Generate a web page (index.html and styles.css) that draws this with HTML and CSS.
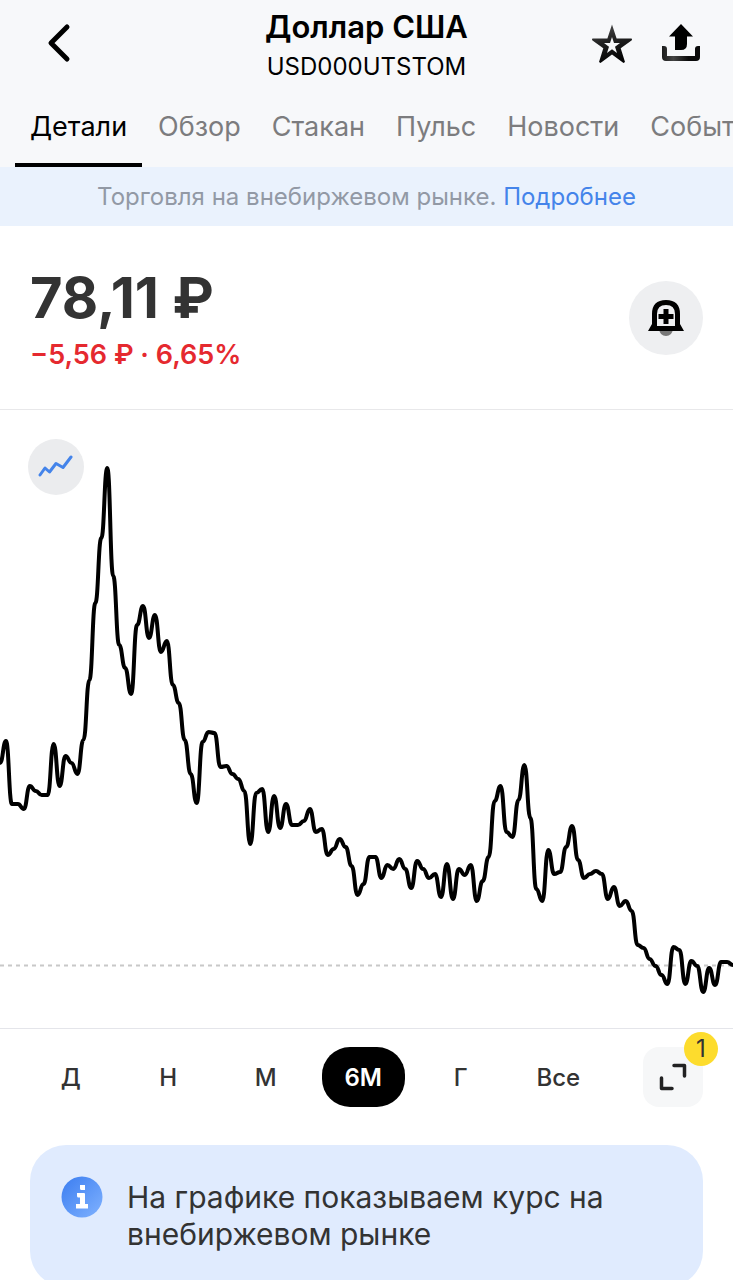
FILE: index.html
```html
<!DOCTYPE html>
<html lang="ru">
<head>
    <meta charset="UTF-8">
    <meta name="viewport" content="width=device-width, initial-scale=1.0">
    <title>Доллар США</title>
    <link rel="stylesheet" href="styles.css">
</head>
<body>
    <div class="screen">
        <header class="header">
            <div class="topbar">
                <div class="topbar-left">
                    <button type="button" class="icon-btn" aria-label="Назад">
                        <svg width="40" height="44" viewBox="0 0 40 44">
                            <path d="M27 7 11 23 27 39" fill="none" stroke="#000" stroke-width="5" stroke-linecap="round" stroke-linejoin="round"/>
                        </svg>
                    </button>
                </div>
                <div class="title">
                    <h1>Доллар США</h1>
                    <p>USD000UTSTOM</p>
                </div>
                <div class="topbar-right">
                    <button type="button" class="icon-btn" aria-label="В избранное">
                        <svg width="40" height="44" viewBox="0 0 40 44">
                            <defs>
                                <linearGradient id="starFill" x1="0" y1="0" x2="0.3" y2="1">
                                    <stop offset="0" stop-color="#555"/>
                                    <stop offset="0.5" stop-color="#222"/>
                                    <stop offset="1" stop-color="#050505"/>
                                </linearGradient>
                            </defs>
                            <path fill="url(#starFill)" fill-rule="evenodd" d="M20 2.500 24.600 16.500H39.500Q40.500 17.600 39.500 18.500L28.700 26.300 33 40 31.500 41 20 32.600 8.500 41 7 40 11.300 26.300 0.500 18.500Q-0.500 17.600 0.500 16.500H15.400ZM20 15 18 21H12L17 24.800 15 31 20 27.300 25 31 23 24.800 28 21H22Z"/>
                        </svg>
                    </button>
                    <button type="button" class="icon-btn" aria-label="Поделиться">
                        <svg width="40" height="44" viewBox="0 0 40 44">
                            <defs>
                                <linearGradient id="trayFill" x1="0" y1="0" x2="1" y2="0">
                                    <stop offset="0" stop-color="#1c1c1c"/>
                                    <stop offset="0.3" stop-color="#444"/>
                                    <stop offset="0.7" stop-color="#0a0a0a"/>
                                </linearGradient>
                            </defs>
                            <path d="M20 2 32 14.500H26V22Q26 28 20 28H14V14.500H8Z"/>
                            <path fill="url(#trayFill)" d="M1 24H3Q6 24 6 27V34H34V27Q34 24 37 24H39V35Q39 39 35 39H5Q1 39 1 35Z"/>
                        </svg>
                    </button>
                </div>
            </div>
            <nav class="tabs">
                <a href="#details" class="active">Детали</a>
                <a href="#overview">Обзор</a>
                <a href="#orderbook">Стакан</a>
                <a href="#pulse">Пульс</a>
                <a href="#news">Новости</a>
                <a href="#events">События</a>
            </nav>
        </header>

        <p class="notice">Торговля на внебиржевом рынке. <a href="#more">Подробнее</a></p>

        <section class="quote">
            <div>
                <p class="price">78,11 ₽</p>
                <p class="change">−5,56 ₽ · 6,65%</p>
            </div>
            <button type="button" class="alert-btn" aria-label="Уведомить о цене">
                <svg width="38" height="38" viewBox="0 0 38 38">
                    <path fill="#777" d="M12 30h14q-1 7-7 7t-7-7z"/>
                    <path fill-rule="evenodd" d="M5 15Q5 1 19 1T33 15V25L37 32H1L5 25ZM10 15V27H28V15Q28 6 19 6T10 15Z"/>
                    <path d="M16.500 10h5v5h5v5h-5v5h-5v-5h-5v-5h5z"/>
                </svg>
            </button>
        </section>

        <section class="chart">
            <button type="button" class="chart-type" aria-label="Тип графика">
                <svg width="36" height="24" viewBox="0 0 36 24">
                    <path d="M2 20 7 13 11.500 17 18 8.500 25 12.500 33 2" fill="none" stroke="#4484ea" stroke-width="3" stroke-linecap="round" stroke-linejoin="round"/>
                </svg>
            </button>
            <svg class="chart-plot" viewBox="0 410 733 618">
                <line class="chart-level" x1="0" y1="965.500" x2="733" y2="965.500"/>
                <path class="chart-line" id="chartLine"/>
            </svg>
        </section>

        <div class="controls">
            <div class="ranges">
                <button type="button">Д</button>
                <button type="button">Н</button>
                <button type="button">М</button>
                <button type="button" class="active">6М</button>
                <button type="button">Г</button>
                <button type="button">Все</button>
            </div>
            <button type="button" class="expand" aria-label="На весь экран, 1">
                <svg width="28" height="28" viewBox="0 0 28 28">
                    <path d="M15 2.500H25.500V13M2.500 15V25.500H13" fill="none" stroke="#222" stroke-width="3.500" stroke-linecap="round" stroke-linejoin="round"/>
                </svg>
                <span class="badge">1</span>
            </button>
        </div>

        <div class="info">
            <svg class="info-icon" width="42" height="42" viewBox="0 0 42 42">
                <defs>
                    <linearGradient id="infoFill" x1="0" y1="0" x2="1" y2="1">
                        <stop offset="0" stop-color="#3b7df0"/>
                        <stop offset="1" stop-color="#80b2ff"/>
                    </linearGradient>
                </defs>
                <circle cx="21" cy="21" r="20.500" fill="url(#infoFill)"/>
                <path fill="#fff" d="M19 9h5v5h-3.500q-1.500 0-1.500-1.500zM16 17h7q1 0 1 1v10h3v4.500h-12v-4.500h4v-6.500h-1.500q-1.500 0-1.500-1.500z"/>
            </svg>
            <p>На графике показываем курс на внебиржевом рынке</p>
        </div>
    </div>

    <script>
        // Chart points, evenly spaced from left to right
        var points = [
            763, 741, 804, 804, 809, 786, 791, 795, 795, 744, 786, 756, 763, 774, 740, 680,
            603, 538, 468, 576, 645, 668, 694, 625, 606, 638, 615, 652, 641, 685, 703, 740,
            774, 803, 742, 732, 733, 767, 766, 774, 779, 791, 844, 793, 789, 832, 796, 828,
            804, 825, 825, 821, 809, 832, 829, 855, 849, 839, 847, 866, 895, 884, 857, 857,
            878, 865, 869, 859, 869, 888, 861, 869, 878, 874, 897, 864, 899, 869, 875, 865,
            901, 881, 857, 801, 786, 832, 837, 800, 765, 818, 889, 901, 850, 874, 872, 847,
            826, 860, 878, 874, 871, 874, 899, 887, 906, 901, 911, 945, 948, 959, 966, 975,
            984, 947, 950, 984, 961, 966, 992, 968, 985, 962, 962, 965
        ];
        var step = 733 / (points.length - 1);
        var d = "M0 " + points[0];

        // Smooth every segment so the line is flat at each point
        for (var i = 1; i < points.length; i++) {
            var mid = (i - 0.5) * step;
            d += " C" + mid + " " + points[i - 1] + " " + mid + " " + points[i] + " " + i * step + " " + points[i];
        }
        document.getElementById("chartLine").setAttribute("d", d);
    </script>
</body>
</html>
```
FILE: styles.css
```css
* {
    box-sizing: border-box;
}
body {
    font-family: Inter, "Liberation Sans", sans-serif;
    background-color: #fff;
    color: #333;
    margin: 0;
}
h1, p {
    margin: 0;
}
a {
    text-decoration: none;
}
button {
    font-family: inherit;
    color: inherit;
    background: none;
    border: none;
    padding: 0;
    cursor: pointer;
}
svg {
    display: block;
}
.screen {
    height: 100vh;
    overflow: hidden;
}
.header {
    background-color: #f7f8fa;
}
.topbar {
    display: grid;
    grid-template-columns: 1fr auto 1fr;
    align-items: center;
    height: 88px;
    padding: 0 32px 0 40px;
}
.topbar-right {
    display: flex;
    justify-content: flex-end;
    gap: 29px;
}
.title {
    padding: 6px 8px 0 0;
    text-align: center;
    color: #000;
}
.title h1 {
    font-size: 31px;
    font-weight: 600;
    line-height: 40px;
}
.title p {
    font-size: 24px;
    line-height: 40px;
}
.tabs {
    display: flex;
    gap: 1px;
    padding-left: 15px;
    overflow: hidden;
}
.tabs a {
    padding: 21px 15px 18px;
    border-bottom: 4px solid transparent;
    color: #7c7c7e;
    font-size: 27px;
    line-height: 36px;
    white-space: nowrap;
}
.tabs a.active {
    color: #000;
    border-color: #000;
}
.notice {
    padding: 12px 16px 11px;
    background-color: #eaf2fd;
    color: #9299a5;
    font-size: 24px;
    line-height: 36px;
    text-align: center;
}
.notice a {
    color: #4484ea;
}
.quote {
    display: flex;
    align-items: center;
    justify-content: space-between;
    padding: 35px 30px 34px;
    border-bottom: 1px solid #e8e8ea;
}
.price {
    font-size: 56px;
    font-weight: 700;
    line-height: 74px;
}
.change {
    color: #e5292f;
    font-size: 27px;
    font-weight: 600;
    line-height: 40px;
}
.alert-btn {
    display: grid;
    place-items: center;
    width: 74px;
    height: 74px;
    border-radius: 50%;
    background-color: #eeeff1;
}
.chart {
    position: relative;
    border-bottom: 1px solid #e4e5ea;
}
.chart-type {
    position: absolute;
    top: 29px;
    left: 28px;
    display: grid;
    place-items: center;
    width: 56px;
    height: 56px;
    border-radius: 50%;
    background-color: #ebecee;
}
.chart-plot {
    width: 100%;
    height: auto;
}
.chart-line {
    fill: none;
    stroke: #000;
    stroke-width: 4;
    stroke-linecap: round;
    stroke-linejoin: round;
}
.chart-level {
    stroke: #c8c8c8;
    stroke-width: 2;
    stroke-dasharray: 4 4;
}
.controls {
    display: flex;
    align-items: center;
    justify-content: space-between;
    gap: 36px;
    padding: 18px 30px 38px 22px;
}
.ranges {
    flex: 1;
    display: grid;
    grid-template-columns: repeat(6, 1fr);
    justify-items: center;
}
.ranges button {
    min-width: 83px;
    height: 60px;
    border-radius: 28px;
    font-size: 24px;
    font-weight: 500;
}
.ranges .active {
    background-color: #000;
    color: #fff;
    font-weight: 600;
}
.expand {
    position: relative;
    display: grid;
    place-items: center;
    width: 60px;
    height: 60px;
    border-radius: 16px;
    background-color: #f6f7f8;
}
.badge {
    position: absolute;
    top: -15px;
    right: -15px;
    width: 34px;
    height: 34px;
    border-radius: 50%;
    background-color: #fddc2d;
    font-size: 24px;
    line-height: 34px;
}
.info {
    display: flex;
    gap: 24px;
    margin: 0 30px 30px;
    padding: 34px 31px;
    border-radius: 36px;
    background-color: #e0ebfe;
}
.info-icon {
    flex: none;
    margin-top: -3px;
}
.info p {
    font-size: 30px;
    line-height: 37px;
}
```
